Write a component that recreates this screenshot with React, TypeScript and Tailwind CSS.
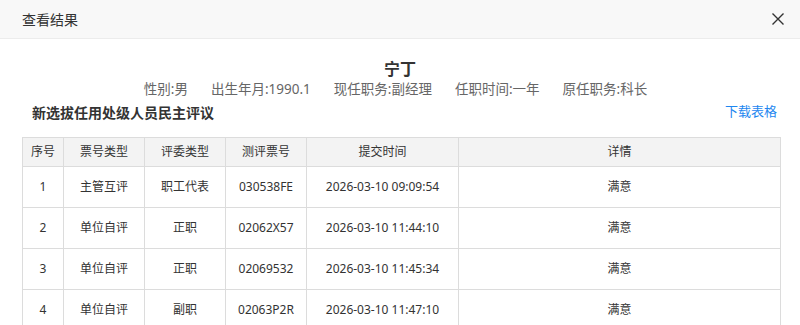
const rows = [
  { no: 1, ticket: '主管互评', judge: '职工代表', code: '030538FE', time: '2026-03-10 09:09:54', detail: '满意' },
  { no: 2, ticket: '单位自评', judge: '正职', code: '02062X57', time: '2026-03-10 11:44:10', detail: '满意' },
  { no: 3, ticket: '单位自评', judge: '正职', code: '02069532', time: '2026-03-10 11:45:34', detail: '满意' },
  { no: 4, ticket: '单位自评', judge: '副职', code: '02063P2R', time: '2026-03-10 11:47:10', detail: '满意' },
];

const cols = ['w-[41px]', 'w-[81px]', 'w-[81px]', 'w-[81px]', 'w-[152px]', ''];

export default function App() {
  return (
    <div className="w-[800px] h-[325px] overflow-hidden bg-white text-[#333] font-['Noto_Sans','Noto_Sans_CJK_SC',sans-serif]">
      <div className="h-[39px] bg-[#f8f8f8] border-b border-[#ececec] flex items-center justify-between pl-[22px] pr-[15px]">
        <span className="text-[14px] text-[#333]">查看结果</span>
        <svg width="14" height="14" viewBox="0 0 14 14" className="text-[#333]">
          <path d="M1.5 1.5 L12.5 12.5 M12.5 1.5 L1.5 12.5" stroke="currentColor" strokeWidth="1.4" />
        </svg>
      </div>

      <div className="pt-[20px] text-center">
        <div className="text-[16px] font-bold leading-[20px] text-[#333]">宁丁</div>
        <div className="text-[13.5px] leading-[20px] text-[#666] flex justify-center gap-[23px] pr-[9px]">
          <span>性别:男</span>
          <span>出生年月:1990.1</span>
          <span>现任职务:副经理</span>
          <span>任职时间:一年</span>
          <span>原任职务:科长</span>
        </div>
      </div>

      <div className="flex items-center justify-between pl-[32px] pr-[23px] h-[26px]">
        <span className="text-[14px] font-bold text-[#333]">新选拔任用处级人员民主评议</span>
        <span className="text-[13px] text-[#1e87f0]">下载表格</span>
      </div>

      <div className="px-[22px] pt-[12px]">
        <table className="w-[759px] border-collapse table-fixed text-[12px] text-[#333]">
          <thead>
            <tr className="bg-[#f3f3f3] h-[29px]">
              {['序号', '票号类型', '评委类型', '测评票号', '提交时间', '详情'].map((h, i) => (
                <th key={h} className={`${cols[i]} border border-[#dcdcdc] font-normal text-center`}>{h}</th>
              ))}
            </tr>
          </thead>
          <tbody>
            {rows.map(r => (
              <tr key={r.no} className="h-[41px]">
                <td className="border border-[#dcdcdc] text-center">{r.no}</td>
                <td className="border border-[#dcdcdc] text-center">{r.ticket}</td>
                <td className="border border-[#dcdcdc] text-center">{r.judge}</td>
                <td className="border border-[#dcdcdc] text-center">{r.code}</td>
                <td className="border border-[#dcdcdc] text-center">{r.time}</td>
                <td className="border border-[#dcdcdc] text-center">{r.detail}</td>
              </tr>
            ))}
          </tbody>
        </table>
      </div>
    </div>
  );
}
